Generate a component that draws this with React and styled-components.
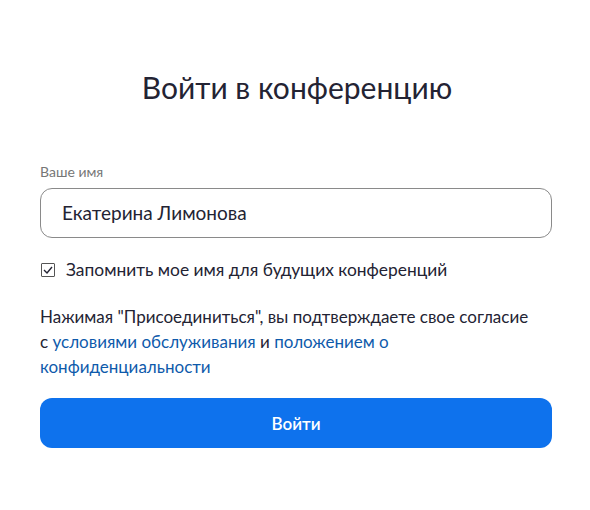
import React from "react";
import styled, { createGlobalStyle } from "styled-components";

const Global = createGlobalStyle`
  html, body { margin: 0; padding: 0; background: #ffffff; }
  body { font-family: Lato, "Noto Sans", sans-serif; color: #232333; }
  * { box-sizing: border-box; }
`;

const Page = styled.div`
  width: 590px;
  min-height: 510px;
  padding: 69px 38px 0 40px;
  display: flex;
  flex-direction: column;
`;

const Title = styled.h1`
  margin: 0 0 59px;
  font-size: 30px;
  font-weight: 400;
  line-height: 36px;
  text-align: center;
  color: #232333;
  padding-left: 2px;
`;

const Label = styled.label`
  font-size: 14px;
  line-height: 16px;
  color: #767676;
  margin-bottom: 8px;
`;

const Input = styled.div`
  height: 50px;
  border: 1px solid #8a8a8a;
  border-radius: 12px;
  display: flex;
  align-items: center;
  padding: 0 21px 1px;
  font-size: 19px;
  color: #232333;
`;

const CheckRow = styled.div`
  display: flex;
  align-items: center;
  gap: 11px;
  margin-top: 22px;
  font-size: 17.4px;
  line-height: 20px;
  padding-left: 1px;
`;

const Box = styled.span`
  width: 14px;
  height: 14px;
  border: 1px solid #555;
  border-radius: 1px;
  display: flex;
  align-items: center;
  justify-content: center;
`;

const Terms = styled.p`
  margin: 24px 0 0;
  max-width: 500px;
  font-size: 17px;
  line-height: 25px;
  color: #232333;
`;

const Link = styled.a`
  color: #0e5aab;
  text-decoration: none;
`;

const Button = styled.button`
  margin-top: 19px;
  height: 50px;
  width: 100%;
  border: none;
  border-radius: 12px;
  background: #0e72ed;
  color: #ffffff;
  font-family: Lato, "Noto Sans", sans-serif;
  font-size: 17px;
  font-weight: 600;
`;

export default function App() {
  return (
    <>
      <Global />
      <Page>
        <Title>Войти в конференцию</Title>
        <Label>Ваше имя</Label>
        <Input>Екатерина Лимонова</Input>
        <CheckRow>
          <Box>
            <svg width="10" height="8" viewBox="0 0 10 8">
              <path d="M1 4 L4 7 L9 1" fill="none" stroke="#232333" strokeWidth="1.4" />
            </svg>
          </Box>
          Запомнить мое имя для будущих конференций
        </CheckRow>
        <Terms>
          Нажимая "Присоединиться", вы подтверждаете свое согласие с{" "}
          <Link>условиями обслуживания</Link> и <Link>положением о конфиденциальности</Link>
        </Terms>
        <Button>Войти</Button>
      </Page>
    </>
  );
}
